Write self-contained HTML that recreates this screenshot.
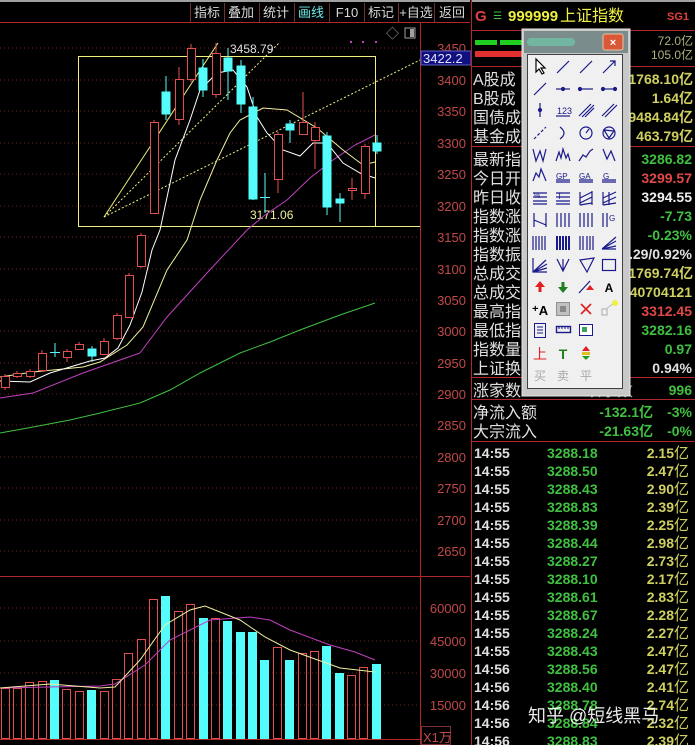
<!DOCTYPE html>
<html><head><meta charset="utf-8"><style>
html,body{margin:0;padding:0;background:#000;}
svg{display:block;font-family:"Liberation Sans","Noto Sans CJK SC",sans-serif;}
</style></head><body>
<svg width="695" height="745" viewBox="0 0 695 745" xmlns="http://www.w3.org/2000/svg">
<rect width="695" height="745" fill="#000"/>
<rect x="0" y="0" width="470" height="2" fill="#a0a0a0"/>
<line x1="0" y1="22.5" x2="470" y2="22.5" stroke="#b02828"/>
<g stroke="#703030"><line x1="190.5" y1="3" x2="190.5" y2="22"/><line x1="224.5" y1="3" x2="224.5" y2="22"/><line x1="259.5" y1="3" x2="259.5" y2="22"/><line x1="294.5" y1="3" x2="294.5" y2="22"/><line x1="329.5" y1="3" x2="329.5" y2="22"/><line x1="364.5" y1="3" x2="364.5" y2="22"/><line x1="398.5" y1="3" x2="398.5" y2="22"/><line x1="434.5" y1="3" x2="434.5" y2="22"/></g>
<g font-size="13" fill="#d8d8d8" text-anchor="middle">
<text x="207" y="17">指标</text><text x="241" y="17">叠加</text><text x="276" y="17">统计</text><text x="311" y="17" fill="#70e8e8">画线</text><text x="347" y="17">F10</text><text x="381" y="17">标记</text><text x="416" y="17">+自选</text><text x="452" y="17">返回</text>
</g>
<g stroke="#702020" stroke-dasharray="1,3">
<line x1="0" y1="48" x2="420" y2="48"/><line x1="0" y1="80" x2="420" y2="80"/><line x1="0" y1="111" x2="420" y2="111"/><line x1="0" y1="143" x2="420" y2="143"/><line x1="0" y1="174" x2="420" y2="174"/><line x1="0" y1="206" x2="420" y2="206"/><line x1="0" y1="237" x2="420" y2="237"/><line x1="0" y1="269" x2="420" y2="269"/><line x1="0" y1="300" x2="420" y2="300"/><line x1="0" y1="331" x2="420" y2="331"/><line x1="0" y1="363" x2="420" y2="363"/><line x1="0" y1="394" x2="420" y2="394"/><line x1="0" y1="425" x2="420" y2="425"/><line x1="0" y1="457" x2="420" y2="457"/><line x1="0" y1="488" x2="420" y2="488"/><line x1="0" y1="520" x2="420" y2="520"/><line x1="0" y1="551" x2="420" y2="551"/>
<line x1="0" y1="608" x2="420" y2="608"/><line x1="0" y1="641" x2="420" y2="641"/><line x1="0" y1="673" x2="420" y2="673"/><line x1="0" y1="705" x2="420" y2="705"/>
</g>
<line x1="420.5" y1="23" x2="420.5" y2="745" stroke="#b02828"/>
<line x1="0" y1="576.5" x2="470" y2="576.5" stroke="#b02828"/>
<line x1="0" y1="739.5" x2="420" y2="739.5" stroke="#b02828"/>
<g font-size="13" fill="#c04848" text-anchor="end">
<text x="466" y="53">3450</text><text x="466" y="85">3400</text><text x="466" y="116">3350</text><text x="466" y="148">3300</text><text x="466" y="179">3250</text><text x="466" y="211">3200</text><text x="466" y="242">3150</text><text x="466" y="274">3100</text><text x="466" y="305">3050</text><text x="466" y="336">3000</text><text x="466" y="368">2950</text><text x="466" y="399">2900</text><text x="466" y="430">2850</text><text x="466" y="462">2800</text><text x="466" y="493">2750</text><text x="466" y="525">2700</text><text x="466" y="556">2650</text>
<text x="466" y="613">60000</text><text x="466" y="646">45000</text><text x="466" y="678">30000</text><text x="466" y="710">15000</text>
</g>
<rect x="421" y="51" width="50" height="14" fill="#101080" stroke="#6060c0"/>
<text x="423" y="63" font-size="13" fill="#e0e0ff">3422.2</text>
<rect x="421.5" y="726.5" width="29" height="18" fill="none" stroke="#803030"/>
<text x="423" y="742" font-size="13" fill="#c04848">X1万</text>
<rect x="78.5" y="56.5" width="297" height="170" fill="none" stroke="#f0f080"/>
<line x1="376" y1="226.5" x2="420" y2="226.5" stroke="#f0f080"/>
<line x1="104" y1="217" x2="218" y2="43" stroke="#f0f080"/>
<line x1="104" y1="217" x2="280" y2="42" stroke="#f0f080" stroke-dasharray="2,2"/>
<line x1="104" y1="217" x2="420" y2="60" stroke="#f0f080" stroke-dasharray="2,2"/>
<text x="230" y="53" font-size="12" fill="#e0e0e0">3458.79</text>
<text x="250" y="219" font-size="12" fill="#f0f0a0">3171.06</text>
<text x="386" y="38" font-size="13" fill="#a0a0a0">◇</text>
<rect x="405" y="28" width="10" height="10" fill="none" stroke="#a0a0a0"/><rect x="410" y="29" width="4" height="8" fill="#a0a0a0"/>
<g fill="#c040c0"><rect x="350" y="41" width="2" height="2"/><rect x="362" y="41" width="2" height="2"/><rect x="375" y="41" width="2" height="2"/></g>
<polyline fill="none" stroke="#40c040" points="0,433 33,427 70,420 100,413 140,403 170,390 200,373 240,353 270,342 300,330 340,315 375,303"/>
<polyline fill="none" stroke="#c040c0" points="0,398 33,393 83,373 140,353 167,317 207,273 247,230 265,215 287,200 310,178 333,160 355,145 375,135"/>
<polyline fill="none" stroke="#f0f0a0" points="0,377 33,372 83,367 100,362 127,345 143,327 167,270 187,240 200,200 217,160 230,133 240,120 263,108 287,110 317,128 343,150 363,165 375,162"/>
<polyline fill="none" stroke="#ffffff" points="0,381 30,382 50,373 70,367 90,361 105,358 118,348 130,325 142,292 152,250 160,230 175,160 190,120 200,90 217,73 233,70 247,87 257,117 267,133 283,150 300,156 313,143 327,143 343,163 360,173 375,178"/>
<g stroke="#e05050" fill="#000">
<line x1="5" y1="374" x2="5" y2="390"/><rect x="1.5" y="376.5" width="8" height="11"/>
<line x1="17" y1="371" x2="17" y2="378"/><rect x="13.5" y="373.5" width="8" height="3"/>
<line x1="30" y1="369" x2="30" y2="378"/><rect x="26.5" y="371.5" width="8" height="5"/>
<line x1="42" y1="350" x2="42" y2="372"/><rect x="38.5" y="353.5" width="8" height="17"/>
<line x1="67" y1="349" x2="67" y2="362"/><rect x="63.5" y="351.5" width="8" height="6"/>
<line x1="79" y1="342" x2="79" y2="350"/><rect x="75.5" y="344.5" width="8" height="5"/>
<line x1="104" y1="338" x2="104" y2="355"/><rect x="100.5" y="341.5" width="8" height="13"/>
<line x1="117" y1="313" x2="117" y2="340"/><rect x="113.5" y="315.5" width="8" height="23"/>
<line x1="129" y1="273" x2="129" y2="318"/><rect x="125.5" y="275.5" width="8" height="42"/>
<line x1="141" y1="233" x2="141" y2="268"/><rect x="137.5" y="235.5" width="8" height="31"/>
<line x1="154" y1="120" x2="154" y2="214"/><rect x="150.5" y="122.5" width="8" height="91"/>
<line x1="179" y1="67" x2="179" y2="125"/><rect x="175.5" y="79.5" width="8" height="40"/>
<line x1="191" y1="44" x2="191" y2="82"/><rect x="187.5" y="48.5" width="8" height="31"/>
<line x1="216" y1="43" x2="216" y2="98"/><rect x="212.5" y="53.5" width="8" height="41"/>
<line x1="278" y1="132" x2="278" y2="193"/><rect x="274.5" y="134.5" width="8" height="45"/>
<line x1="303" y1="92" x2="303" y2="134"/><rect x="299.5" y="122.5" width="8" height="12"/>
<line x1="315" y1="122" x2="315" y2="169"/><rect x="311.5" y="127.5" width="8" height="13"/>
<line x1="352" y1="178" x2="352" y2="200"/><rect x="348.5" y="188.5" width="8" height="2"/>
<line x1="365" y1="144" x2="365" y2="199"/><rect x="361.5" y="146.5" width="8" height="47"/>
</g>
<g stroke="#54fcfc" fill="#54fcfc">
<line x1="55" y1="343" x2="55" y2="357"/><line x1="50" y1="352.5" x2="60" y2="352.5"/>
<line x1="92" y1="346" x2="92" y2="362"/><rect x="88" y="349" width="8" height="7"/>
<line x1="166" y1="76" x2="166" y2="120"/><rect x="162" y="92" width="8" height="22"/>
<line x1="203" y1="59" x2="203" y2="97"/><rect x="199" y="68" width="8" height="22"/>
<line x1="228" y1="48" x2="228" y2="100"/><rect x="224" y="58" width="8" height="13"/>
<line x1="241" y1="60" x2="241" y2="113"/><rect x="237" y="66" width="8" height="38"/>
<line x1="253" y1="97" x2="253" y2="200"/><rect x="249" y="107" width="8" height="92"/>
<line x1="265" y1="173" x2="265" y2="213"/><line x1="260" y1="197.5" x2="270" y2="197.5"/>
<line x1="290" y1="120" x2="290" y2="143"/><rect x="286" y="124" width="8" height="6"/>
<line x1="327" y1="132" x2="327" y2="215"/><rect x="323" y="136" width="8" height="71"/>
<line x1="340" y1="193" x2="340" y2="222"/><rect x="336" y="199" width="8" height="4"/>
<line x1="377" y1="135" x2="377" y2="154"/><rect x="373" y="143" width="8" height="8"/>
</g>
<g stroke="#e05050" fill="none">
<rect x="1.5" y="688.5" width="8" height="50"/><rect x="13.5" y="688.5" width="8" height="50"/><rect x="25.5" y="682.5" width="8" height="56"/><rect x="38.5" y="681.5" width="8" height="57"/>
<rect x="62.5" y="689.5" width="8" height="49"/><rect x="75.5" y="691.5" width="8" height="47"/><rect x="100.5" y="691.5" width="8" height="47"/><rect x="112.5" y="679.5" width="8" height="59"/>
<rect x="124.5" y="653.5" width="8" height="85"/><rect x="137.5" y="639.5" width="8" height="99"/><rect x="149.5" y="599.5" width="8" height="139"/>
<rect x="174.5" y="611.5" width="8" height="127"/><rect x="186.5" y="604.5" width="8" height="134"/><rect x="211.5" y="618.5" width="8" height="120"/>
<rect x="273.5" y="647.5" width="8" height="91"/><rect x="298.5" y="653.5" width="8" height="85"/><rect x="310.5" y="651.5" width="8" height="87"/>
<rect x="347.5" y="675.5" width="8" height="63"/><rect x="359.5" y="667.5" width="8" height="71"/>
</g>
<g fill="#54fcfc">
<rect x="50" y="680" width="9" height="59"/><rect x="87" y="690" width="9" height="49"/><rect x="161" y="596" width="9" height="143"/><rect x="199" y="618" width="9" height="121"/>
<rect x="223" y="621" width="9" height="118"/><rect x="236" y="632" width="9" height="107"/><rect x="248" y="632" width="9" height="107"/><rect x="260" y="660" width="9" height="79"/>
<rect x="285" y="660" width="9" height="79"/><rect x="322" y="646" width="9" height="93"/><rect x="335" y="673" width="9" height="66"/><rect x="372" y="664" width="9" height="75"/>
</g>
<polyline fill="none" stroke="#c040c0" points="0,688 50,687 100,686 115,684 145,665 170,640 210,620 250,617 270,620 290,630 330,645 355,652 375,660"/>
<polyline fill="none" stroke="#f0f0a0" points="0,688 50,684 100,688 115,687 140,660 165,625 190,610 205,606 240,620 265,637 290,650 315,659 340,668 375,672"/>

<line x1="471.5" y1="0" x2="471.5" y2="745" stroke="#b02828"/>
<rect x="472" y="0" width="223" height="2" fill="#a0a0a0"/>
<g stroke="#b02828"><line x1="472" y1="30.5" x2="695" y2="30.5"/><line x1="472" y1="66.5" x2="695" y2="66.5"/><line x1="472" y1="146.5" x2="695" y2="146.5"/><line x1="472" y1="377.5" x2="695" y2="377.5"/><line x1="472" y1="399.5" x2="695" y2="399.5"/><line x1="472" y1="441.5" x2="695" y2="441.5"/></g>
<text x="475" y="21" font-size="15" font-weight="bold" fill="#e04040">G</text>
<text x="493" y="19" font-size="10" fill="#40c040">☰</text>
<text x="508" y="21" font-size="15" font-weight="bold" fill="#f0f040">999999</text>
<text x="560" y="21" font-size="16" fill="#f0f040">上证指数</text>
<text x="667" y="20" font-size="11" font-weight="bold" fill="#e04040">SG1</text>
<rect x="475" y="40" width="22" height="5" fill="#20d020"/><rect x="500" y="40" width="22" height="5" fill="#20d020"/>
<rect x="475" y="51" width="48" height="6" fill="#e03030"/>
<g font-size="12" fill="#b0b080" text-anchor="end"><text x="693" y="45">72.0亿</text><text x="693" y="59">105.0亿</text></g>
<g font-size="16" fill="#e0e0e0">
<text x="473" y="85">A股成</text><text x="473" y="104">B股成</text><text x="473" y="123">国债成</text><text x="473" y="142">基金成</text>
<text x="473" y="165">最新指</text><text x="473" y="184">今日开</text><text x="473" y="203">昨日收</text><text x="473" y="222">指数涨</text><text x="473" y="241">指数涨</text><text x="473" y="260">指数振</text><text x="473" y="279">总成交</text><text x="473" y="298">总成交</text><text x="473" y="317">最高指</text><text x="473" y="336">最低指</text><text x="473" y="355">指数量</text><text x="473" y="374">上证换</text>
<text x="473" y="396">涨家数</text><text x="585" y="396" fill="#a0a0a0">跌家数</text>
<text x="473" y="418">净流入额</text><text x="473" y="437">大宗流入</text>
</g>
<g font-size="14" font-weight="bold" text-anchor="end">
<text x="693" y="84" fill="#d0d060">1768.10亿</text><text x="693" y="103" fill="#d0d060">1.64亿</text><text x="693" y="122" fill="#d0d060">9484.84亿</text><text x="693" y="141" fill="#d0d060">463.79亿</text>
<text x="692" y="164" fill="#40c040">3286.82</text><text x="692" y="183" fill="#e04848">3299.57</text><text x="692" y="202" fill="#f0f0f0">3294.55</text><text x="692" y="221" fill="#40c040">-7.73</text><text x="692" y="240" fill="#40c040">-0.23%</text><text x="692" y="259" fill="#e0e0e0">.29/0.92%</text><text x="693" y="278" fill="#d0d060">1769.74亿</text><text x="692" y="297" fill="#d0d060">40704121</text><text x="692" y="316" fill="#e04848">3312.45</text><text x="692" y="335" fill="#40c040">3282.16</text><text x="692" y="354" fill="#40c040">0.97</text><text x="692" y="373" fill="#e0e0e0">0.94%</text>
<text x="692" y="395" fill="#40c040">996</text>
<text x="653" y="417" fill="#40c040">-132.1亿</text><text x="692" y="417" fill="#40c040">-3%</text>
<text x="653" y="436" fill="#40c040">-21.63亿</text><text x="692" y="436" fill="#40c040">-0%</text>
</g>
<g font-size="14" font-weight="bold">
<g fill="#e0e0e0">
<text x="474" y="458">14:55</text><text x="474" y="476">14:55</text><text x="474" y="494">14:55</text><text x="474" y="512">14:55</text><text x="474" y="530">14:55</text><text x="474" y="548">14:55</text><text x="474" y="566">14:55</text><text x="474" y="584">14:55</text><text x="474" y="602">14:55</text><text x="474" y="620">14:55</text><text x="474" y="638">14:55</text><text x="474" y="656">14:55</text><text x="474" y="674">14:56</text><text x="474" y="692">14:56</text><text x="474" y="710">14:56</text><text x="474" y="728">14:56</text><text x="474" y="746">14:56</text>
</g>
<g fill="#40c040">
<text x="547" y="458">3288.18</text><text x="547" y="476">3288.50</text><text x="547" y="494">3288.43</text><text x="547" y="512">3288.83</text><text x="547" y="530">3288.39</text><text x="547" y="548">3288.44</text><text x="547" y="566">3288.27</text><text x="547" y="584">3288.10</text><text x="547" y="602">3288.61</text><text x="547" y="620">3288.67</text><text x="547" y="638">3288.24</text><text x="547" y="656">3288.43</text><text x="547" y="674">3288.56</text><text x="547" y="692">3288.40</text><text x="547" y="710">3288.78</text><text x="547" y="728">3288.84</text><text x="547" y="746">3288.83</text>
</g>
<g fill="#d0d060" text-anchor="end">
<text x="674" y="458">2.15</text><text x="674" y="476">2.47</text><text x="674" y="494">2.90</text><text x="674" y="512">2.39</text><text x="674" y="530">2.25</text><text x="674" y="548">2.98</text><text x="674" y="566">2.73</text><text x="674" y="584">2.17</text><text x="674" y="602">2.83</text><text x="674" y="620">2.28</text><text x="674" y="638">2.27</text><text x="674" y="656">2.47</text><text x="674" y="674">2.47</text><text x="674" y="692">2.41</text><text x="674" y="710">2.74</text><text x="674" y="728">2.32</text><text x="674" y="746">2.39</text>
</g>
</g>
<g font-size="15" fill="#d0d060">
<text x="674" y="458">亿</text><text x="674" y="476">亿</text><text x="674" y="494">亿</text><text x="674" y="512">亿</text><text x="674" y="530">亿</text><text x="674" y="548">亿</text><text x="674" y="566">亿</text><text x="674" y="584">亿</text><text x="674" y="602">亿</text><text x="674" y="620">亿</text><text x="674" y="638">亿</text><text x="674" y="656">亿</text><text x="674" y="674">亿</text><text x="674" y="692">亿</text><text x="674" y="710">亿</text><text x="674" y="728">亿</text><text x="674" y="746">亿</text>
</g>
<text x="528" y="722" font-size="18" fill="#ffffff" opacity="0.92">知乎 @短线黑马</text>

<rect x="522" y="29" width="108" height="367" fill="#c8c8c8" stroke="#e8e8e8"/>
<rect x="524" y="31" width="104" height="22" fill="#7a8c8c"/>
<rect x="527" y="38" width="48" height="8" rx="4" fill="#70c0a8" opacity="0.8"/>
<rect x="603" y="34" width="20" height="16" rx="2" fill="#d85838" stroke="#f0c0a0"/>
<text x="613" y="46" font-size="11" font-weight="bold" fill="#fff" text-anchor="middle">×</text>
<rect x="527.5" y="54.5" width="95" height="334" fill="#f0f0f0" stroke="#404040"/>
<g stroke="#1a1a8a" fill="none" stroke-width="1.2">
<path d="M536,59 L536,72 L539,69 L542,74 L544,73 L541,68 L545,68 Z" fill="#fff" stroke="#000"/>
<path d="M557,73 L569,61"/><path d="M580,73 L592,61"/><path d="M603,73 L615,61 M610,61 L615,61 L615,66"/>
<path d="M534,95 L546,83"/><path d="M556,89 L570,89"/><circle cx="563" cy="89" r="1.5" fill="#1a1a8a"/>
<path d="M579,89 L593,89"/><circle cx="580" cy="89" r="1.5" fill="#1a1a8a"/>
<path d="M602,89 L616,89"/><circle cx="603" cy="89" r="1.5" fill="#1a1a8a"/><circle cx="615" cy="89" r="1.5" fill="#1a1a8a"/>
<path d="M540,103 L540,117"/><circle cx="540" cy="110" r="1.5" fill="#1a1a8a"/>
<path d="M556,116 L570,116"/><path d="M579,116 L591,104 M582,117 L594,105 M585,117 L594,108"/><path d="M602,116 L614,104 M605,117 L617,105"/>
<path d="M534,139 L546,127" stroke-dasharray="3,2"/><path d="M560,127 Q568,133 560,139"/><circle cx="586" cy="133" r="6"/><path d="M586,133 L589,129"/>
<circle cx="609" cy="133" r="6"/><path d="M604,130 L614,131 L609,138 Z"/>
<path d="M533,149 L536,161 L540,151 L543,161 L546,149"/><path d="M556,161 L559,152 L561,158 L563,149 L566,158 L568,154 L570,161"/><path d="M579,161 L583,155 L586,157 L590,151 L593,149"/><path d="M603,149 L607,159 L611,151 L615,161"/>
<path d="M533,181 L536,173 L539,177 L541,169 L544,176 L546,181"/>
<path d="M556,180 L570,180 M556,182 L570,182"/><path d="M579,180 L593,180 M579,182 L593,182"/><path d="M602,180 L616,180 M602,182 L616,182"/>
<path d="M533,193 L547,193 M533,197 L547,197 M533,201 L547,201 M533,204 L547,204"/>
<path d="M556,193 L570,193 M556,197 L570,197 M556,201 L570,201 M556,204 L570,204"/>
<path d="M580,192 L580,205 M580,198 L592,192 M580,203 L592,197 M580,205 L592,203 M592,191 L592,205"/>
<path d="M603,192 L603,205 M603,198 L616,192 M603,203 L616,197 M603,205 L616,203 M609,192 L609,205"/>
<path d="M534,213 L534,227 M534,220 L546,225 M546,213 L546,227"/>
<path d="M557,213 L557,227 M561,213 L561,227 M565,213 L565,227 M569,213 L569,227"/>
<path d="M580,213 L580,227 M584,213 L584,227 M588,213 L588,227 M592,213 L592,227"/>
<path d="M603,213 L603,227 M607,213 L607,227"/>
<path d="M533,236 L533,250 M536,236 L536,250 M539,236 L539,250 M542,236 L542,250 M545,236 L545,250"/>
<path d="M557,236 L557,250 M560,236 L560,250 M563,236 L563,250 M566,236 L566,250 M569,236 L569,250" stroke-width="2"/>
<path d="M580,236 L580,250 M583,236 L583,250 M587,236 L587,250 M590,236 L590,250 M593,236 L593,250"/>
<path d="M602,249 L616,237 M602,249 L616,241 M602,249 L616,246 M602,249 L616,249"/>
<path d="M533,258 L533,272 L547,272 M533,272 L546,260 M533,272 L547,264 M533,272 L547,268"/>
<path d="M557,259 L563,271 L569,259 M563,259 L563,271"/><path d="M580,260 L594,258 L587,272 Z"/><rect x="602.5" y="259.5" width="13" height="11"/>
</g>
<g font-family="Liberation Sans,sans-serif" font-size="9" fill="#1a1a8a">
<text x="557" y="114">123</text><text x="556" y="179" font-size="8">GP</text><text x="579" y="179" font-size="8">GA</text><text x="603" y="179" font-size="8">G</text>
<text x="534" y="198" font-size="7">%</text><text x="557" y="199" font-size="8">T</text><text x="609" y="221" font-size="8">G</text>
</g>
<path d="M540,281 L535,287 L538.5,287 L538.5,292 L541.5,292 L541.5,287 L545,287 Z" fill="#e02020"/>
<path d="M563,293 L558,287 L561.5,287 L561.5,282 L564.5,282 L564.5,287 L568,287 Z" fill="#208020"/>
<path d="M579,293 L590,281" stroke="#1a1a8a" stroke-width="1.2"/><path d="M590,285 L586,290 L594,290 Z" fill="#e02020"/>
<text x="609" y="292" font-size="12" font-weight="bold" fill="#000" text-anchor="middle">A</text>
<text x="540" y="315" font-size="13" font-weight="bold" fill="#000" text-anchor="middle">⁺A</text>
<rect x="556.5" y="302.5" width="13" height="13" fill="#c0c0c0" stroke="#909090"/><rect x="560" y="306" width="6" height="6" fill="#888"/>
<path d="M581,304 L591,314 M591,304 L581,314" stroke="#e02020" stroke-width="1.6"/>
<rect x="602" y="309" width="5" height="6" fill="none" stroke="#aaa"/><path d="M606,309 L614,303" stroke="#bbb"/><circle cx="615" cy="303" r="3" fill="#f0f040"/>
<rect x="534.5" y="323.5" width="11" height="14" fill="none" stroke="#1a1a8a"/><path d="M537,327 L543,327 M537,330 L543,330 M537,333 L543,333" stroke="#1a1a8a"/>
<rect x="556.5" y="326.5" width="14" height="6" fill="none" stroke="#1a1a8a" stroke-width="1.4"/><path d="M559,327 L559,329 M562,327 L562,329 M565,327 L565,329 M568,327 L568,329" stroke="#1a1a8a"/>
<rect x="579.5" y="324.5" width="13" height="11" fill="#fff" stroke="#1a1a8a"/><rect x="582" y="327" width="5" height="5" fill="#40a060"/>
<text x="540" y="359" font-size="14" fill="#e02020" text-anchor="middle">上</text>
<text x="563" y="359" font-size="14" fill="#208020" text-anchor="middle" font-weight="bold">T</text>
<path d="M586,346 L582,351 L590,351 Z" fill="#e02020"/><rect x="582" y="352" width="8" height="3" fill="#e0c020"/><path d="M582,356 L590,356 L586,360 Z" fill="#20a020"/>
<g font-size="12" fill="#a8a8a8" text-anchor="middle"><text x="540" y="380">买</text><text x="563" y="380">卖</text><text x="586" y="380">平</text></g>
</svg>
</body></html>
